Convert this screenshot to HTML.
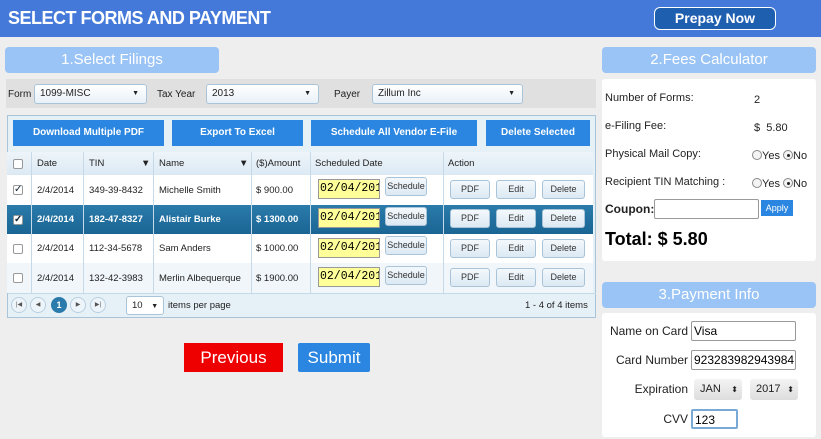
<!DOCTYPE html>
<html><head><style>
*{box-sizing:border-box;margin:0;padding:0}
body{width:821px;height:439px;background:#eee;font-family:"Liberation Sans",sans-serif;position:relative;overflow:hidden;font-size:10px;color:#222}
.a{position:absolute}
.ttl{position:absolute;background:#9ac4f5;color:#fff;font-size:15px;text-align:center;border-radius:4px;line-height:26px;height:26px}
.sel{position:absolute;background:linear-gradient(#fff,#e8f1f8);border:1px solid #a9c4d8;border-radius:3px;height:20px;font-size:10px;line-height:18px;padding-left:5px}
.sel span{position:absolute;right:7px;font-size:7px}
.tb{position:absolute;background:#2a86e0;color:#fff;font-weight:bold;font-size:10px;text-align:center;line-height:26px;top:120px;height:26px}
.row{position:absolute;left:7px;width:586px}
.c{position:absolute;top:0;height:100%;display:flex;align-items:center;font-size:9.5px;white-space:nowrap}
.bt{position:absolute;background:linear-gradient(#f3f8fc,#dce9f3);border:1px solid #a9c4d8;border-radius:3px;font-size:9px;text-align:center;color:#333;height:19px;line-height:17px}
.dt{position:absolute;background:#ffff99;border:1px solid #999;font-family:"Liberation Mono",monospace;font-size:11.5px;left:318px;width:62px;height:20px;line-height:18px;padding-left:1px;overflow:hidden;white-space:nowrap;color:#000}
.cb{width:10px;height:10px;border:1px solid #999;border-radius:2px;background:#fff;font-size:10px;line-height:8px;text-align:center;color:#123}
.vl{position:absolute;top:152px;height:141px;width:1px;background:#c5d9e8}
.rad{display:inline-block;width:10px;height:10px;border:1px solid #888;border-radius:50%;vertical-align:-1px;background:#f4f4f4;position:relative}
.rad.on:after{content:"";position:absolute;left:2.5px;top:2.5px;width:3px;height:3px;background:#222;border-radius:50%}
.inp{position:absolute;border:1px solid #999;background:#fff;border-radius:2px;font-size:12px;padding-left:2px;line-height:18px;height:20px;overflow:hidden;white-space:nowrap;color:#000}
.t{position:absolute;font-size:11px;color:#222;white-space:nowrap}
.pl{position:absolute;font-size:12px;color:#222;white-space:nowrap;text-align:right;left:600px;width:88px}
.pg{position:absolute;top:297px;width:16px;height:16px;border:1px solid #b8cfe0;border-radius:50%;background:#eef5fa;font-size:6px;color:#555;text-align:center;line-height:14px}
</style></head><body>
<div class="a" style="left:0;top:0;width:821px;height:37px;background:#4479d9"></div>
<div class="a" style="left:8px;top:8px;color:#fff;font-weight:bold;font-size:18px;letter-spacing:-0.5px">SELECT FORMS AND PAYMENT</div>
<div class="a" style="left:654px;top:7px;width:122px;height:23px;background:#1f5fb0;border:1.5px solid #fff;border-radius:6px;color:#fff;font-size:14px;font-weight:bold;text-align:center;line-height:20px">Prepay Now</div>

<div class="ttl" style="left:5px;top:47px;width:214px">1.Select Filings</div>
<div class="a" style="left:6px;top:79px;width:590px;height:29px;background:#e0e0e0"></div>
<div class="a" style="left:8px;top:89px">Form</div>
<div class="sel" style="left:34px;top:84px;width:113px">1099-MISC<span>▼</span></div>
<div class="a" style="left:157px;top:89px">Tax Year</div>
<div class="sel" style="left:206px;top:84px;width:113px">2013<span>▼</span></div>
<div class="a" style="left:334px;top:89px">Payer</div>
<div class="sel" style="left:372px;top:84px;width:151px">Zillum Inc<span>▼</span></div>

<div class="a" style="left:7px;top:115px;width:589px;height:203px;background:#e6f0f7;border:1px solid #a9c4d8"></div>
<div class="tb" style="left:13px;width:151px">Download Multiple PDF</div>
<div class="tb" style="left:172px;width:131px">Export To Excel</div>
<div class="tb" style="left:311px;width:166px">Schedule All Vendor E-File</div>
<div class="tb" style="left:486px;width:104px">Delete Selected</div>

<div class="row" style="top:152px;height:23px;background:linear-gradient(#eef5fa,#dce9f3)">
<div class="c" style="left:6px"><div class="cb"></div></div>
<div class="c" style="left:30px">Date</div><div class="c" style="left:82px">TIN</div><div class="c" style="left:134px">▼</div>
<div class="c" style="left:152px">Name</div><div class="c" style="left:232px">▼</div><div class="c" style="left:249px">($)Amount</div>
<div class="c" style="left:308px">Scheduled Date</div><div class="c" style="left:441px">Action</div></div>

<div class="row" style="top:175px;height:30px;background:#fff"></div>
<div class="row" style="top:205px;height:29px;background:linear-gradient(#2a7bab,#1a6594)"></div>
<div class="row" style="top:234px;height:29px;background:#fff"></div>
<div class="row" style="top:263px;height:30px;background:#f0f6fa"></div>

<div class="vl" style="left:31px"></div><div class="vl" style="left:83px"></div><div class="vl" style="left:153px"></div><div class="vl" style="left:251px"></div><div class="vl" style="left:310px"></div><div class="vl" style="left:443px"></div>

<div class="row" style="top:175px;height:30px"><div class="c" style="left:6px"><div class="cb">✓</div></div><div class="c" style="left:30px">2/4/2014</div><div class="c" style="left:82px">349-39-8432</div><div class="c" style="left:152px">Michelle Smith</div><div class="c" style="left:249px">$ 900.00</div></div>
<div class="row" style="top:205px;height:29px;color:#fff;font-weight:bold"><div class="c" style="left:6px"><div class="cb">✓</div></div><div class="c" style="left:30px">2/4/2014</div><div class="c" style="left:82px">182-47-8327</div><div class="c" style="left:152px">Alistair Burke</div><div class="c" style="left:249px">$ 1300.00</div></div>
<div class="row" style="top:234px;height:29px"><div class="c" style="left:6px"><div class="cb"></div></div><div class="c" style="left:30px">2/4/2014</div><div class="c" style="left:82px">112-34-5678</div><div class="c" style="left:152px">Sam Anders</div><div class="c" style="left:249px">$ 1000.00</div></div>
<div class="row" style="top:263px;height:30px"><div class="c" style="left:6px"><div class="cb"></div></div><div class="c" style="left:30px">2/4/2014</div><div class="c" style="left:82px">132-42-3983</div><div class="c" style="left:152px">Merlin Albequerque</div><div class="c" style="left:249px">$ 1900.00</div></div>

<div class="dt" style="top:179px">02/04/201</div><div class="bt" style="left:385px;top:177px;width:42px">Schedule</div>
<div class="dt" style="top:208px">02/04/201</div><div class="bt" style="left:385px;top:207px;width:42px">Schedule</div>
<div class="dt" style="top:238px">02/04/201</div><div class="bt" style="left:385px;top:236px;width:42px">Schedule</div>
<div class="dt" style="top:267px">02/04/201</div><div class="bt" style="left:385px;top:266px;width:42px">Schedule</div>

<div class="bt" style="left:450px;top:180px;width:40px">PDF</div><div class="bt" style="left:496px;top:180px;width:40px">Edit</div><div class="bt" style="left:542px;top:180px;width:43px">Delete</div>
<div class="bt" style="left:450px;top:209px;width:40px">PDF</div><div class="bt" style="left:496px;top:209px;width:40px">Edit</div><div class="bt" style="left:542px;top:209px;width:43px">Delete</div>
<div class="bt" style="left:450px;top:239px;width:40px">PDF</div><div class="bt" style="left:496px;top:239px;width:40px">Edit</div><div class="bt" style="left:542px;top:239px;width:43px">Delete</div>
<div class="bt" style="left:450px;top:268px;width:40px">PDF</div><div class="bt" style="left:496px;top:268px;width:40px">Edit</div><div class="bt" style="left:542px;top:268px;width:43px">Delete</div>

<div class="a" style="left:8px;top:293px;width:588px;height:1px;background:#c5d9e8"></div>
<div class="pg" style="left:11px">|◀</div><div class="pg" style="left:30px">◀</div>
<div class="pg" style="left:51px;background:#2a7bab;border-color:#2a7bab;color:#fff;font-size:9px;font-weight:bold">1</div>
<div class="pg" style="left:70px">▶</div><div class="pg" style="left:90px">▶|</div>
<div class="a" style="left:126px;top:296px;width:38px;height:19px;border:1px solid #a9c4d8;border-radius:3px;background:#fff;font-size:9.5px;line-height:17px;padding-left:5px">10 <span style="font-size:7px;margin-left:6px">▼</span></div>
<div class="a" style="left:168px;top:300px;font-size:9.5px">items per page</div>
<div class="a" style="left:525px;top:300px;font-size:9.5px">1 - 4 of 4 items</div>

<div class="a" style="left:184px;top:343px;width:99px;height:29px;background:#e00;color:#fff;font-size:17px;text-align:center;line-height:29px">Previous</div>
<div class="a" style="left:298px;top:343px;width:72px;height:29px;background:#2a86e0;color:#fff;font-size:17px;text-align:center;line-height:29px;border-radius:2px">Submit</div>

<div class="ttl" style="left:602px;top:47px;width:214px">2.Fees Calculator</div>
<div class="a" style="left:602px;top:79px;width:214px;height:182px;background:#fff;border-radius:3px"></div>
<div class="t" style="left:605px;top:92px">Number of Forms:</div><div class="t" style="left:754px;top:94px">2</div>
<div class="t" style="left:605px;top:120px">e-Filing Fee:</div><div class="t" style="left:754px;top:122px">$&nbsp; 5.80</div>
<div class="t" style="left:605px;top:148px">Physical Mail Copy:</div><div class="t" style="left:752px;top:150px"><span class="rad"></span>Yes <span class="rad on"></span>No</div>
<div class="t" style="left:605px;top:176px">Recipient TIN Matching :</div><div class="t" style="left:752px;top:178px"><span class="rad"></span>Yes <span class="rad on"></span>No</div>
<div class="t" style="left:605px;top:202px;font-weight:bold;font-size:12px">Coupon:</div>
<div class="inp" style="left:654px;top:199px;width:105px"></div>
<div class="a" style="left:761px;top:200px;width:32px;height:16px;background:#2a86e0;color:#fff;font-size:9px;text-align:center;line-height:16px">Apply</div>
<div class="t" style="left:605px;top:229px;font-weight:bold;font-size:18px;color:#000">Total: $ 5.80</div>

<div class="ttl" style="left:602px;top:282px;width:214px">3.Payment Info</div>
<div class="a" style="left:602px;top:313px;width:214px;height:124px;background:#fff;border-radius:3px"></div>
<div class="pl" style="top:324px">Name on Card</div><div class="inp" style="left:691px;top:321px;width:105px">Visa</div>
<div class="pl" style="top:353px">Card Number</div><div class="inp" style="left:691px;top:350px;width:105px">923283982943984</div>
<div class="pl" style="top:382px">Expiration</div>
<div class="a" style="left:694px;top:379px;width:48px;height:21px;background:linear-gradient(#f4f4f4,#ddd);border-radius:3px;font-size:11px;line-height:21px;padding-left:6px">JAN <span style="position:absolute;right:4px;font-size:8px">⬍</span></div>
<div class="a" style="left:750px;top:379px;width:48px;height:21px;background:linear-gradient(#f4f4f4,#ddd);border-radius:3px;font-size:11px;line-height:21px;padding-left:6px">2017 <span style="position:absolute;right:4px;font-size:8px">⬍</span></div>
<div class="pl" style="top:412px">CVV</div><div class="inp" style="left:691px;top:409px;width:47px;border:2px solid #7aa9d6">123</div>
</body></html>
